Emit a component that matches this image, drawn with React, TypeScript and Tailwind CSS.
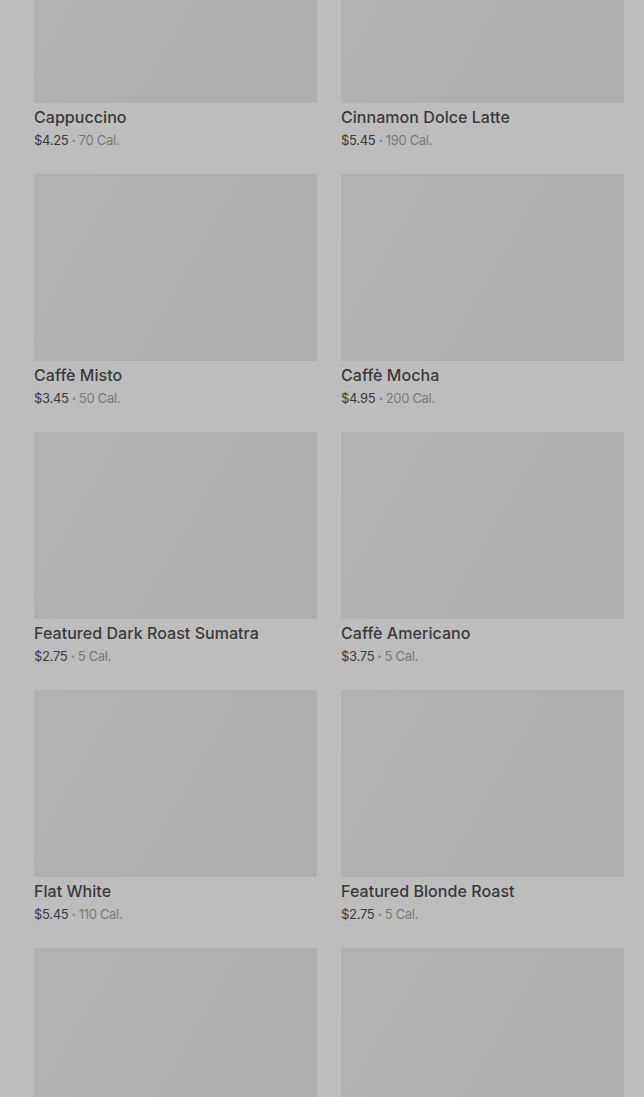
import React from "react";

const items = [
  { name: "Cappuccino", price: "$4.25", cal: "70 Cal." },
  { name: "Cinnamon Dolce Latte", price: "$5.45", cal: "190 Cal." },
  { name: "Caffè Misto", price: "$3.45", cal: "50 Cal." },
  { name: "Caffè Mocha", price: "$4.95", cal: "200 Cal." },
  { name: "Featured Dark Roast Sumatra", price: "$2.75", cal: "5 Cal." },
  { name: "Caffè Americano", price: "$3.75", cal: "5 Cal." },
  { name: "Flat White", price: "$5.45", cal: "110 Cal." },
  { name: "Featured Blonde Roast", price: "$2.75", cal: "5 Cal." },
  { name: "", price: "", cal: "" },
  { name: "", price: "", cal: "" },
];

export default function App() {
  return (
    <div
      className="w-[644px] h-[1097px] overflow-hidden bg-[#bdbdbd]"
      style={{ fontFamily: "Inter, 'Noto Sans', sans-serif" }}
    >
      <div className="grid grid-cols-2 gap-x-[24px] gap-y-[24px] pl-[34px] pr-[20px] -mt-[84px]">
        {items.map((it, i) => (
          <div key={i} className="flex flex-col">
            <div className="h-[187px] bg-[linear-gradient(120deg,#b2b2b2_0%,#b1b1b1_40%,#afafaf_60%,#afafaf_100%)]" />
            {it.name && (
              <div className="flex flex-col pt-[2px]">
                <div className="text-[16px] leading-[24px] font-medium text-[#3a3a3a] tracking-[0.05px]">
                  {it.name}
                </div>
                <div className="mt-[1px] text-[13px] leading-[20px] text-[#3a3a3a] tracking-[-0.3px] flex items-center">
                  <span>{it.price}</span>
                  <span className="mx-[3px] text-[8px] text-[#8a8a8a]">•</span>
                  <span className="text-[#7a7a7a]">{it.cal}</span>
                </div>
              </div>
            )}
          </div>
        ))}
      </div>
    </div>
  );
}
